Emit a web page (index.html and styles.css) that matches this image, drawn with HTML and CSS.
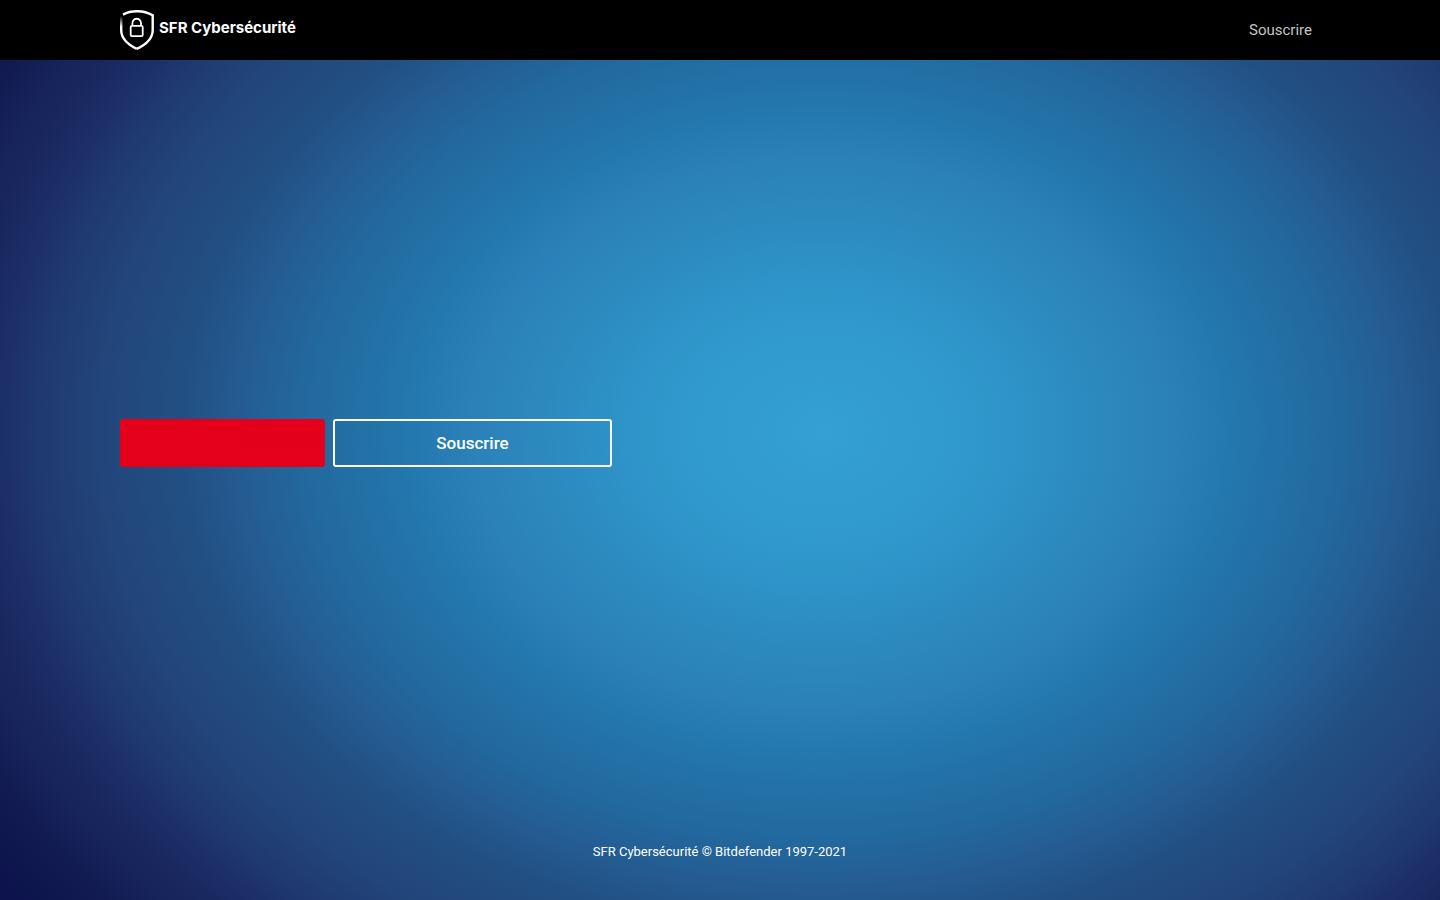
FILE: index.html
```
<!DOCTYPE html>
<html lang="fr">
<head>
<meta charset="utf-8">
<meta name="viewport" content="width=device-width, initial-scale=1">
<title>SFR Cybersécurité</title>
<link rel="stylesheet" href="styles.css">
</head>
<body>
<header class="header">
  <div class="container header-row">
    <a class="brand" href="#">
      <svg class="brand-icon" width="34" height="40" viewBox="0 0 34 40" fill="none" stroke="#fff" aria-hidden="true">
        <defs>
          <linearGradient id="fade" gradientUnits="userSpaceOnUse" x1="0" y1="6" x2="0" y2="17">
            <stop offset="0" stop-color="#fff" stop-opacity="0"/>
            <stop offset="1" stop-color="#fff"/>
          </linearGradient>
        </defs>
        <path d="M3 4.600C11 .1 23.500 .1 32.700 5.300V20c0 8.500-6.500 14.500-15.900 18.900" stroke-width="2.400"/>
        <path d="M1.200 6V20c0 8.500 6.500 14.500 15.600 18.900" stroke="url(#fade)" stroke-width="2.400"/>
        <rect x="10.700" y="15.800" width="12" height="10.400" rx="1.200" stroke-width="1.800"/>
        <path d="M12.400 15.600v-2.200c0-6.200 8.600-6.200 8.600 0v2.200" stroke-width="1.800"/>
      </svg>
      <span class="brand-name">SFR Cybersécurité</span>
    </a>
    <nav class="nav"><a class="nav-link" href="#">Souscrire</a></nav>
  </div>
</header>
<main class="main container">
  <div class="actions">
    <button class="btn btn-primary" type="button" aria-label="Connexion"></button>
    <button class="btn btn-outline" type="button">Souscrire</button>
  </div>
</main>
<footer class="footer">SFR Cybersécurité © Bitdefender 1997-2021</footer>
</body>
</html>
```
FILE: styles.css
```
* { box-sizing: border-box; }

body {
  margin: 0;
  min-height: 100vh;
  display: flex;
  flex-direction: column;
  font-family: Roboto, "Liberation Sans", sans-serif;
  color: #fff;
  background: radial-gradient(70% 88vh at 57% 48%,
    #34a0d4 0%, #3098cc 15%, #2e93c8 20%, #2c8abf 27%,
    #2b80b8 35%, #2379b0 40%, #2373a8 44%, #22699f 51%,
    #245b91 58%, #225084 63%, #22467b 71%, #1f3870 78%,
    #1c3067 81%, #1b2961 84%, #17235b 88%, #101950 94%,
    #0d144d 99%);
}

.container {
  width: 100%;
  max-width: 1200px;
  margin: 0 auto;
}

.header { background: #000; }

.header-row {
  display: flex;
  align-items: center;
  justify-content: space-between;
  height: 60px;
}

.brand {
  display: flex;
  align-items: center;
  gap: 5px;
  color: #fff;
  text-decoration: none;
}

.brand-icon { display: block; }

.brand-name {
  padding-bottom: 4px;
  font: 700 15px/20px Inter, sans-serif;
}

.nav { padding: 0 8px; }

.nav-link {
  color: #c4c4c4;
  font-size: 15px;
  line-height: 20px;
  text-decoration: none;
}

.main {
  flex: 1;
  display: flex;
  align-items: center;
}

.actions {
  display: flex;
  flex-wrap: wrap;
  gap: 8px;
}

.btn {
  height: 48px;
  padding: 0 16px;
  border: 2px solid transparent;
  border-radius: 3px;
  color: #fff;
  font: 500 17px/24px Roboto, sans-serif;
  cursor: pointer;
}

.btn-primary {
  width: 205px;
  border-color: #e4001b;
  background: #e4001b;
}

.btn-outline {
  width: 279px;
  border-color: #fff;
  background: transparent;
}

.footer {
  padding: 16px 16px 38px;
  font-size: 13px;
  line-height: 20px;
  text-align: center;
}
```
